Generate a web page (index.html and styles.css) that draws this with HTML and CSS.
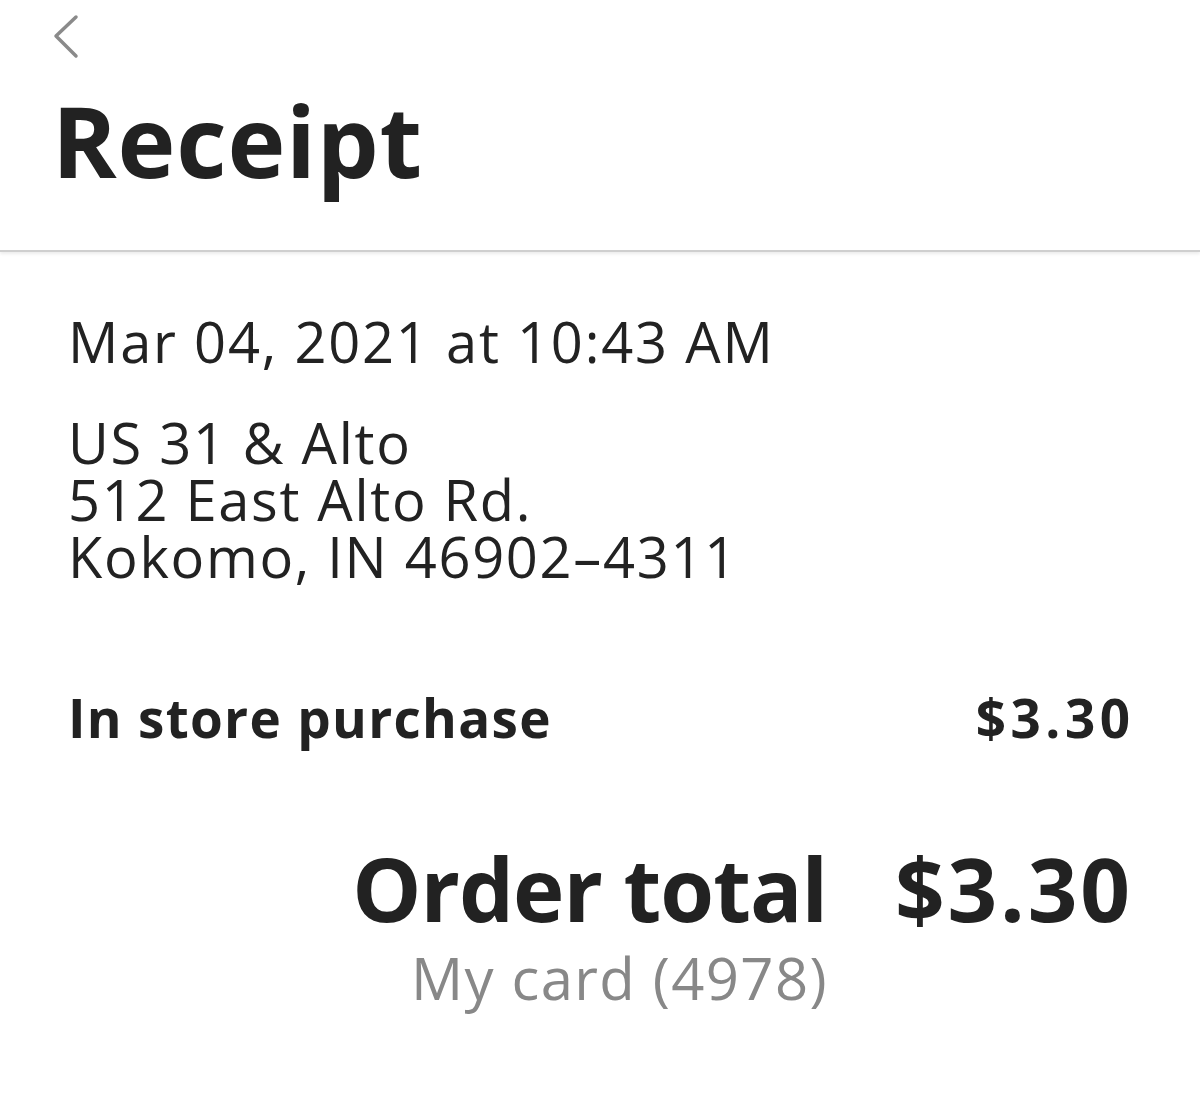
FILE: index.html
```html
<!DOCTYPE html>
<html lang="en">

<head>
    <meta charset="UTF-8">
    <meta name="viewport" content="width=device-width, initial-scale=1.0">
    <title>Receipt</title>
    <link rel="stylesheet" href="styles.css">
</head>

<body>

    <!-- Top bar with back arrow and title -->
    <header class="top-bar">
        <button class="back-button" aria-label="Back">
            <svg width="30" height="46" viewBox="0 0 30 46">
                <path d="M24 3 L4 22 L24 42" fill="none" stroke="#8a8a8a" stroke-width="3.5" stroke-linecap="round" stroke-linejoin="round" />
            </svg>
        </button>
        <h1>Receipt</h1>
    </header>

    <main class="receipt">
        <p class="date">Mar 04, 2021 at 10:43 AM</p>

        <address class="store">
            US 31 &amp; Alto<br>
            512 East Alto Rd.<br>
            Kokomo, IN 46902–4311
        </address>

        <div class="line-item">
            <span>In store purchase</span>
            <span class="amount">$3.30</span>
        </div>

        <div class="total">
            <div class="total-row">
                <span class="total-label">Order total</span>
                <span class="amount">$3.30</span>
            </div>
            <div class="payment">My card (4978)</div>
        </div>
    </main>

</body>

</html>
```

FILE: styles.css
```css
body {
    margin: 0;
    font-family: "Open Sans", Lato, sans-serif;
    color: #222;
    background: #fff;
}

.top-bar {
    padding: 14px 0 0 52px;
    height: 252px;
    border-bottom: 2px solid #cfcfcf;
    box-shadow: 0 2px 3px rgba(0, 0, 0, 0.08);
    box-sizing: border-box;
}

.back-button {
    display: block;
    border: none;
    background: none;
    padding: 0;
    cursor: pointer;
}

h1 {
    margin: 28px 0 0 0;
    font-size: 98px;
    font-weight: 700;
    line-height: 1;
    letter-spacing: 0.8px;
    color: #222;
}

.receipt {
    padding: 57px 70px 0 68px;
}

.date {
    margin: 0;
    font-size: 56px;
    line-height: 64px;
    letter-spacing: 1.8px;
}

.store {
    margin-top: 41px;
    font-style: normal;
    font-size: 56px;
    line-height: 57px;
    letter-spacing: 1.7px;
}

.line-item {
    display: flex;
    justify-content: space-between;
    margin-top: 96px;
    font-size: 53px;
    font-weight: 700;
    letter-spacing: 1.3px;
}

.line-item .amount {
    letter-spacing: 4.5px;
    margin-right: -4.5px;
}

.total {
    display: flex;
    flex-direction: column;
    align-items: flex-end;
    margin-top: 91px;
}

.total-row {
    display: flex;
    gap: 68px;
    font-size: 87px;
    font-weight: 700;
    line-height: 1;
}

.total-label {
    letter-spacing: -1px;
}

.total-row .amount {
    letter-spacing: 2.8px;
    margin-right: -2.8px;
}

.payment {
    margin-right: 302px;
    margin-top: 6px;
    font-size: 58px;
    letter-spacing: 1.4px;
    color: #888;
}
```
